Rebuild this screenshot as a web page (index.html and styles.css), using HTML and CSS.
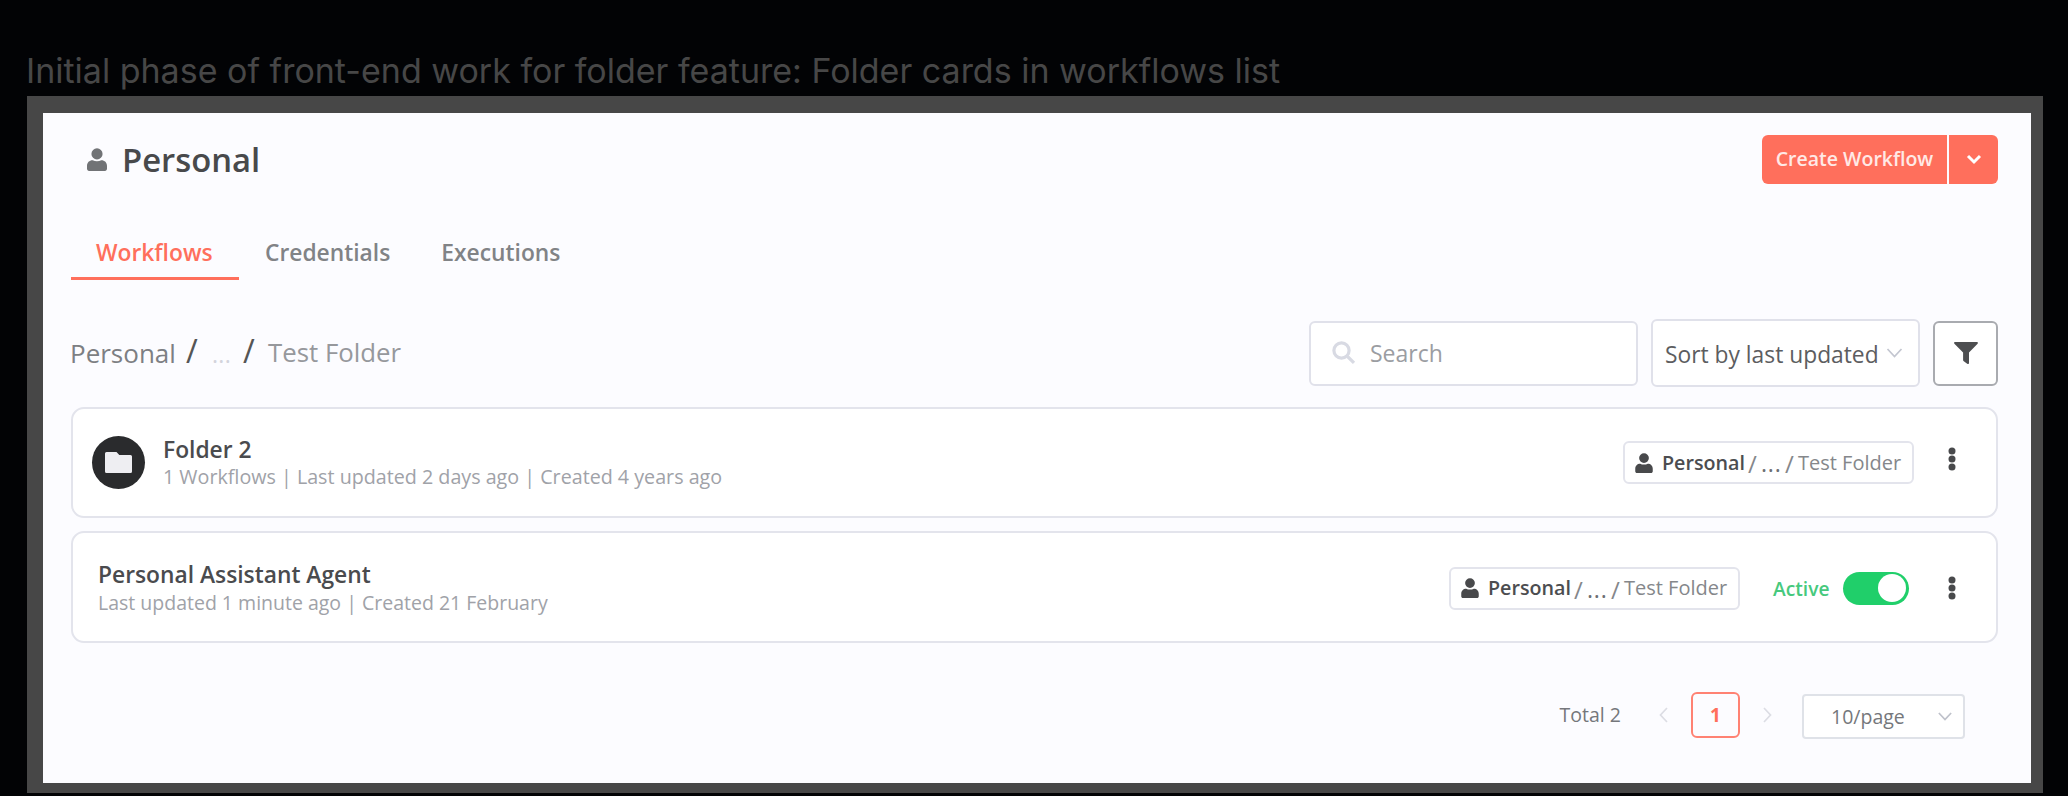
FILE: index.html
```html
<!DOCTYPE html>
<html lang="en">
<head>
<meta charset="utf-8">
<title>Personal – Workflows</title>
<link rel="stylesheet" href="styles.css">
</head>
<body>
<svg class="defs" aria-hidden="true">
  <symbol id="user" viewBox="0 0 448 512"><path d="M224 256a120 120 0 1 0 0-250 120 120 0 0 0 0 250zm96 18c-28 14-60 22-96 22s-68-8-96-22C50 274 0 328 0 400v64c0 26 20 48 46 48h356c26 0 46-22 46-48v-64c0-72-50-126-128-126z"/></symbol>
  <symbol id="chevron" viewBox="0 0 16 10"><path d="M1 1l7 7.5L15 1" fill="none" stroke="currentColor"/></symbol>
  <symbol id="dots" viewBox="0 0 8 24"><circle cx="4" cy="4" r="3.5"/><circle cx="4" cy="12" r="3.5"/><circle cx="4" cy="20" r="3.5"/></symbol>
</svg>
<p class="caption">Initial phase of front-end work for folder feature: Folder cards in workflows list</p>
<main class="frame">
  <header class="header">
    <svg class="header-icon"><use href="#user"/></svg>
    <h1 class="title">Personal</h1>
    <div class="create">
      <button class="create-main">Create Workflow</button>
      <button class="create-more" aria-label="More"><svg viewBox="0 0 14 9"><path d="M1 1l6 6 6-6" fill="none" stroke="currentColor"/></svg></button>
    </div>
  </header>

  <nav class="tabs">
    <a class="tab tab-active">Workflows</a>
    <a class="tab">Credentials</a>
    <a class="tab">Executions</a>
  </nav>

  <section class="toolbar">
    <div class="crumbs">
      <span class="crumb-root">Personal</span>
      <span class="crumb-slash">/</span>
      <span class="crumb-more">...</span>
      <span class="crumb-slash">/</span>
      <span class="crumb-current">Test Folder</span>
    </div>
    <div class="search">
      <svg viewBox="0 0 24 24"><circle cx="9.5" cy="9.5" r="7.6"/><path d="M15.5 15.5l6.5 6.3"/></svg>
      <span>Search</span>
    </div>
    <div class="sort"><span>Sort by last updated</span><svg><use href="#chevron"/></svg></div>
    <button class="filter" aria-label="Filter"><svg viewBox="0 0 24 24"><path d="M1.2 1h21.6c1 0 1.4 1 .8 1.7L15 11.6V22c0 1-1 1.4-1.8.8l-3.4-2.5c-.5-.3-.7-.8-.7-1.3v-7.4L.4 2.7C-.3 2 .2 1 1.2 1z"/></svg></button>
  </section>

  <article class="card card-folder">
    <div class="avatar"><svg viewBox="0 0 27 21"><path d="M1.500 0H11.500L14.300 3H25.500Q27 3 27 4.500V19.500Q27 21 25.500 21H1.500Q0 21 0 19.500V1.500Q0 0 1.500 0z"/></svg></div>
    <div class="info">
      <h2 class="name">Folder 2</h2>
      <p class="meta">1 Workflows | Last updated 2 days ago | Created 4 years ago</p>
    </div>
    <div class="chip">
      <svg><use href="#user"/></svg><b>Personal</b><span class="slash">/</span><span class="more">...</span><span class="slash">/</span><span class="place">Test Folder</span>
    </div>
    <svg class="menu"><use href="#dots"/></svg>
  </article>

  <article class="card card-workflow">
    <div class="info">
      <h2 class="name">Personal Assistant Agent</h2>
      <p class="meta">Last updated 1 minute ago | Created 21 February</p>
    </div>
    <div class="chip">
      <svg><use href="#user"/></svg><b>Personal</b><span class="slash">/</span><span class="more">...</span><span class="slash">/</span><span class="place">Test Folder</span>
    </div>
    <span class="status">Active</span>
    <span class="toggle"><i></i></span>
    <svg class="menu"><use href="#dots"/></svg>
  </article>

  <footer class="pagination">
    <span class="total">Total 2</span>
    <svg class="arrow" viewBox="0 0 9 16"><path d="M8 1L1.500 8 8 15"/></svg>
    <span class="page">1</span>
    <svg class="arrow" viewBox="0 0 9 16"><path d="M1 1l6.500 7L1 15"/></svg>
    <div class="page-size"><span>10/page</span><svg><use href="#chevron"/></svg></div>
  </footer>
</main>
</body>
</html>
```
FILE: styles.css
```css
* { box-sizing: border-box; }
html, body { height: 100%; overflow: hidden; }
body {
  margin: 0;
  background: #020305;
  font-family: "Open Sans", sans-serif;
  white-space: nowrap;
}
h1, h2, p { margin: 0; }
button { font: inherit; padding: 0; border: 0; }
svg { display: block; flex: none; fill: currentColor; }
.defs { display: none; }

.caption {
  height: 96px;
  padding: 50px 0 0 26px;
  font: 400 34px/41px Inter, sans-serif;
  color: #474747;
}
.frame {
  width: 2016px;
  height: 697px;
  margin-left: 27px;
  padding: 22px 33px 0 28px;
  border: solid #474747;
  border-width: 17px 12px 10px 16px;
  background: #fcfcff;
}

.header { display: flex; align-items: center; height: 49px; }
.header-icon { width: 20px; height: 23px; margin-left: 16px; color: #717376; }
.title {
  margin-left: 15px;
  font-size: 32.8px;
  line-height: 49px;
  font-weight: 600;
  color: #48494b;
}
.create { display: flex; gap: 2px; margin-left: auto; height: 49px; }
.create button { background: #ff6f5c; color: #fff; }
.create-main {
  width: 185px;
  border-radius: 6px 0 0 6px;
}
.create .create-main { font-size: 19.5px; font-weight: 600; line-height: 47px; padding-bottom: 2px; color: #ffe9e6; }
.create-more { width: 49px; border-radius: 0 6px 6px 0; }
.create-more svg { width: 14px; height: 9px; margin: 0 auto; stroke-width: 3; overflow: visible; }

.tabs { display: flex; gap: 1px; height: 54px; margin-top: 42px; }
.tab {
  padding: 2px 25px 0;
  font-size: 22.8px;
  line-height: 49px;
  font-weight: 600;
  color: #818386;
  border-bottom: 3px solid transparent;
}
.tab-active { width: 168px; color: #ff6f5c; border-color: #ff6f5c; }

.toolbar { display: flex; align-items: center; height: 68px; margin-top: 39px; }
.crumbs { display: flex; align-items: baseline; margin: 0 auto 0 -1px; font-size: 26px; line-height: 68px; }
.crumb-root { width: 116px; color: #7d7f83; }
.crumb-slash { width: 26px; font-size: 32px; line-height: 60px; color: #555; }
.crumb-more { width: 31px; font-size: 23px; color: #d3d4dc; letter-spacing: .3px; }
.crumb-current { margin: 0 0 0 -1px; font-size: 25.8px; color: #96989c; position: relative; top: -1px; }
.search {
  display: flex;
  align-items: center;
  width: 329px;
  height: 65px;
  margin-right: 13px;
  padding-left: 21px;
  border: 2px solid #e0e1ea;
  border-radius: 6px;
  background: #fff;
  font-size: 23px;
  color: #9b9da2;
}
.search svg { width: 24px; height: 24px; margin-right: 14px; fill: none; stroke: #d8dae3; stroke-width: 3.2; }
.sort {
  display: flex;
  align-items: center;
  width: 269px;
  height: 68px;
  margin-right: 13px;
  padding-left: 12px;
  border: 2px solid #e0e1ea;
  border-radius: 6px;
  background: #fff;
  font-size: 22.8px;
  color: #5c5d60;
}
.sort span { padding-top: 3px; }
.sort svg { width: 17px; height: 10px; margin-left: 7px; color: #c3c6d0; stroke-width: 1.7; }
.filter {
  display: grid;
  place-items: center;
  width: 65px;
  height: 65px;
  border: 2px solid #a9abb0;
  border-radius: 6px;
  background: #fff;
  color: #4d4e50;
}
.filter svg { width: 24px; height: 24px; }

.card {
  display: flex;
  align-items: center;
  border: 2px solid #e3e4ec;
  border-radius: 13px;
  background: #fff;
}
.card-folder { height: 111px; margin-top: 20px; padding: 0 40px 0 19px; }
.card-workflow { height: 112px; margin-top: 13px; padding: 2px 40px 0 24px; }
.avatar {
  display: grid;
  place-items: center;
  width: 53px;
  height: 53px;
  margin-right: 18px;
  border-radius: 50%;
  background: #2a2b2d;
  color: #eeeef2;
}
.avatar svg { width: 27px; height: 21px; }
.info { margin-right: auto; }
.name { font-size: 22.8px; line-height: 29px; font-weight: 600; color: #4a4b4e; }
.meta { font-size: 19.700px; line-height: 26px; color: #a0a2a8; }
.card-workflow .info { padding-left: 1px; }
.card-workflow .name { line-height: 27px; padding-bottom: 2px; }
.card-workflow .meta { font-size: 19.5px; }
.chip {
  display: flex;
  align-items: center;
  width: 291px;
  height: 43px;
  padding-left: 10px;
  border: 2px solid #e3e4ec;
  border-radius: 6px;
  font-size: 20px;
  line-height: 25px;
}
.chip svg { width: 18px; height: 20px; margin-right: 9px; color: #48494b; }
.chip b { width: 86px; font-size: 19.7px; font-weight: 600; color: #4c4d50; padding-bottom: 1px; }
.slash { width: 13px; font-size: 24px; color: #85878b; padding-top: 2px; }
.more { width: 24px; font-size: 23px; letter-spacing: .8px; color: #6d6f73; padding-top: 2px; }
.place { font-weight: 500; color: #85878b; padding-bottom: 1px; }
.menu { width: 8px; height: 24px; color: #48494b; }
.card-folder .menu { margin: 0 0 8px 34px; }
.status { margin-left: 33px; width: 70px; font-size: 19.2px; font-weight: 600; color: #46c97d; }
.toggle {
  display: flex;
  justify-content: flex-end;
  align-items: center;
  width: 66px;
  height: 33px;
  padding-right: 3px;
  margin-right: 39px;
  border-radius: 17px;
  background: #20cf6a;
}
.toggle i { width: 28px; height: 28px; border-radius: 50%; background: #fff; }

.pagination {
  display: flex;
  align-items: center;
  justify-content: flex-end;
  height: 45px;
  margin-top: 49px;
  padding-right: 33px;
}
.total { font-size: 19.5px; color: #75777b; margin-right: 38px; padding-bottom: 1px; }
.arrow { width: 9px; height: 16px; fill: none; stroke: #dcdde4; stroke-width: 1.7; }
.page {
  width: 49px;
  height: 46px;
  margin: 0 23px;
  border: 2px solid #ff8273;
  border-radius: 6px;
  font-size: 19px;
  line-height: 42px;
  font-weight: 700;
  text-align: center;
  color: #ff6f5c;
}
.page-size {
  display: flex;
  align-items: center;
  width: 163px;
  height: 45px;
  margin-top: 4px;
  margin-left: 30px;
  padding-left: 27px;
  border: 2px solid #dfe2e8;
  border-radius: 4px;
  background: #fff;
  font-size: 19.5px;
  color: #75777b;
}
.page-size svg { width: 14px; height: 9px; margin-left: 33px; color: #bfc2cb; stroke-width: 2; }
```
